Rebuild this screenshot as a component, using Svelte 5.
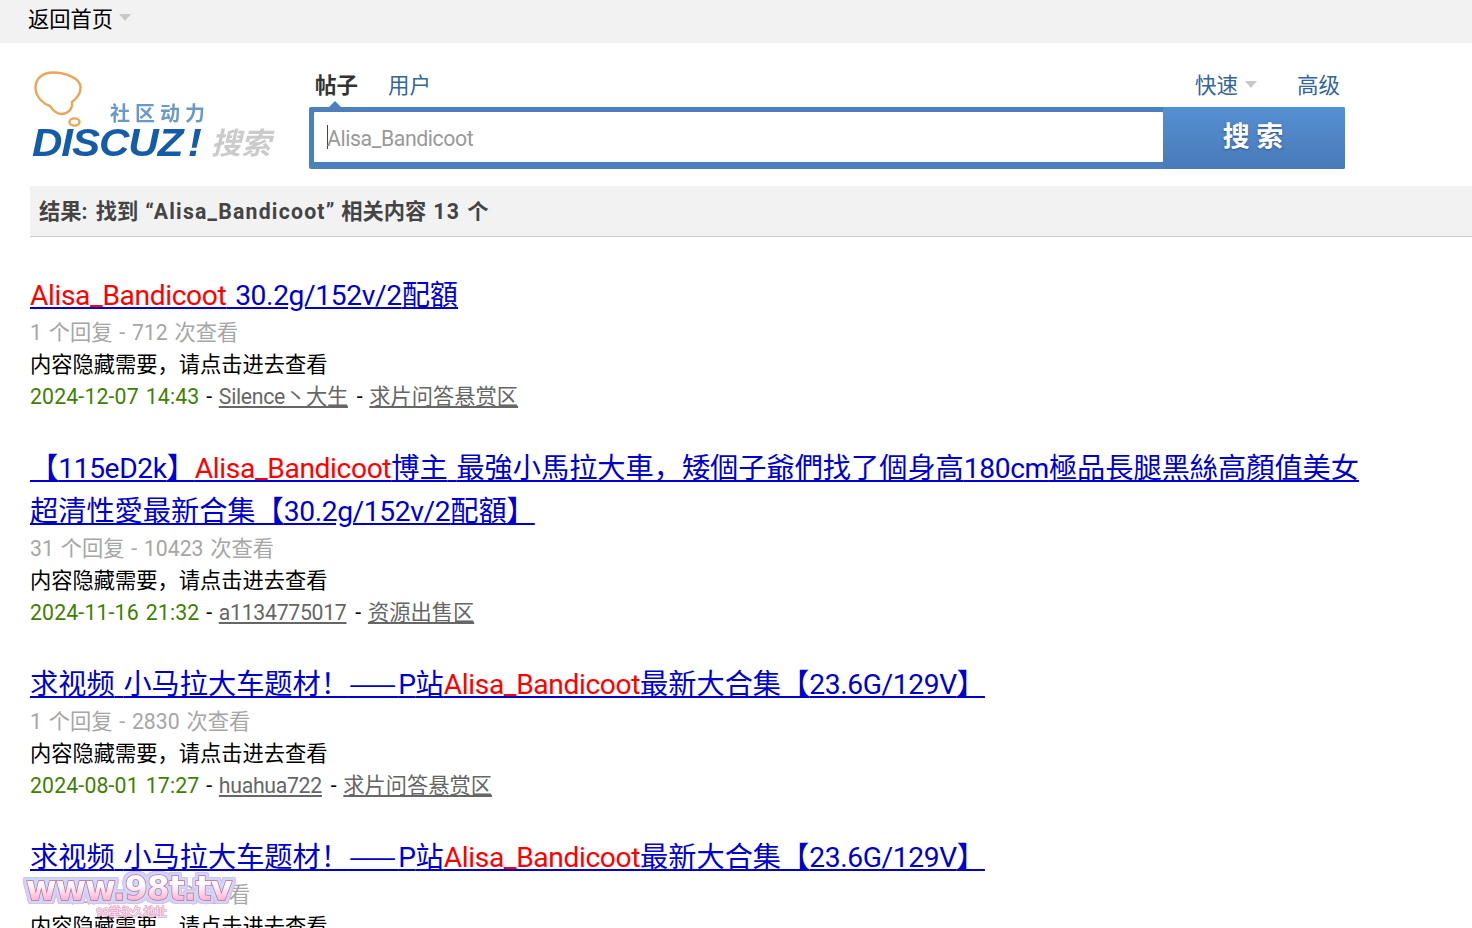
<script>
  const tag = 'Alisa_Bandicoot';

  const results = [
    {
      title: [[tag, true], [' 30.2g/152v/2配額', false]],
      meta: '1 个回复 - 712 次查看',
      date: '2024-12-07 14:43',
      user: 'Silence丶大生',
      forum: '求片问答悬赏区'
    },
    {
      title: [
        ['【115eD2k】', false],
        [tag, true],
        ['博主 最強小馬拉大車，矮個子爺們找了個身高180cm極品長腿黑絲高顏值美女超清性愛最新合集【30.2g/152v/2配額】', false]
      ],
      meta: '31 个回复 - 10423 次查看',
      date: '2024-11-16 21:32',
      user: 'a1134775017',
      forum: '资源出售区'
    },
    {
      title: [
        ['求视频 小马拉大车题材！——P站', false],
        [tag, true],
        ['最新大合集【23.6G/129V】', false]
      ],
      meta: '1 个回复 - 2830 次查看',
      date: '2024-08-01 17:27',
      user: 'huahua722',
      forum: '求片问答悬赏区'
    },
    {
      title: [
        ['求视频 小马拉大车题材！——P站', false],
        [tag, true],
        ['最新大合集【23.6G/129V】', false]
      ],
      meta: '1 个回复 - 1934 次查看',
      date: '2024-08-01 17:27',
      user: 'huahua722',
      forum: '求片问答悬赏区'
    }
  ];

  // latin runs need their own letter-spacing, the cjk ones don't
  function runs(text) {
    return text.match(/[\x20-\x7e]+|—+|[^\x20-\x7e—]+/g).map((t) => ({
      t,
      kind: t[0] === '—' ? 'dash' : t.charCodeAt(0) < 127 ? 'lat' : 'cjk'
    }));
  }
</script>

<div class="topbar">
  <a class="home" href="#top">返回首页</a>
  <span class="caret"></span>
</div>

<header class="head">
  <div class="logo">
    <svg class="bubble" width="52" height="60" viewBox="0 0 52 60">
      <path
        d="M2.5 18C2.5 8 10 2.5 20 2.5C32 2.5 47 8 47.5 17C48 24 43 29 39 32C40 37 37 43 29 44C22 44 19 39 17 36C11 34 3 28 2.5 18Z"
        fill="none"
        stroke="#eba557"
        stroke-width="2.4"
      />
      <ellipse cx="41.5" cy="52" rx="5" ry="3.6" fill="none" stroke="#eba557" stroke-width="2.4" />
    </svg>
    <span class="slogan">社区动力</span>
    <span class="brand">DISCUZ<em>!</em></span>
    <span class="sou">搜索</span>
  </div>

  <div class="search">
    <div class="tabs">
      <div class="tabs-left">
        <span class="tab on">帖子</span>
        <span class="tab">用户</span>
      </div>
      <div class="tabs-right">
        <span class="tab">快速</span>
        <span class="caret blue-caret"></span>
        <span class="tab adv">高级</span>
      </div>
    </div>
    <div class="box">
      <span class="notch"></span>
      <div class="input"><span class="cursor"></span><span class="typed">Alisa_Bandicoot</span></div>
      <div class="submit">搜 索</div>
    </div>
  </div>
</header>

<div class="summary">{#each runs('结果: 找到 “Alisa_Bandicoot” 相关内容 13 个') as run}<span class={run.kind}>{run.t}</span>{/each}</div>

<ul class="list">
  {#each results as r}
    <li>
      <h3>
        <a href="#top">{#each r.title as part}{#if part[1]}<strong class="lat">{part[0]}</strong>{:else}{#each runs(part[0]) as run}<span class={run.kind}>{run.t}</span>{/each}{/if}{/each}</a>
      </h3>
      <p class="meta">{r.meta}</p>
      <p>内容隐藏需要，请点击进去查看</p>
      <p>
        <span class="date">{r.date}</span>
        -
        <a class="sub user" href="#top">{r.user}</a>
        -
        <a class="sub" href="#top">{r.forum}</a>
      </p>
    </li>
  {/each}
</ul>

<div class="mark">
  <svg class="mark-art" width="228" height="62" viewBox="0 0 228 62">
    <defs>
      <linearGradient id="pinkfill" x1="0" y1="0" x2="0" y2="1">
        <stop offset="0.4" stop-color="#fff" />
        <stop offset="1" stop-color="#f590bb" />
      </linearGradient>
    </defs>
    <text class="url" x="8" y="34" fill="url(#pinkfill)">www.98t.tv</text>
    <text class="sub-url" x="78" y="50">98堂永久地址</text>
  </svg>
</div>

<style>
  :global(html),
  :global(body) {
    height: 100%;
    overflow: hidden;
    background: #fff;
  }

  :global(body) {
    font-family: Roboto, "Noto Sans CJK SC", sans-serif;
    font-size: 21.25px;
    color: #000;
  }

  .topbar {
    height: 43px;
    background: #f2f2f2;
    padding-left: 28px;
    display: flex;
    align-items: flex-start;
    line-height: 40px;
  }

  .home {
    color: #000;
    text-decoration: none;
  }

  .caret {
    width: 0;
    height: 0;
    margin: 14px 0 0 6px;
    border: 6.5px solid transparent;
    border-top: 7px solid #c8c8c8;
    border-bottom: 0;
  }

  .head {
    display: flex;
    height: 143px;
  }

  .logo {
    position: relative;
    width: 309px;
    flex: none;
  }

  .bubble {
    position: absolute;
    left: 33px;
    top: 27px;
    filter: blur(0.3px);
  }

  .slogan {
    position: absolute;
    left: 110px;
    top: 56px;
    font-size: 20px;
    font-weight: 700;
    letter-spacing: 5px;
    color: #6a99c9;
    line-height: 30px;
    filter: blur(0.3px);
  }

  .brand {
    position: absolute;
    left: 32px;
    top: 75px;
    font-family: "Liberation Sans", sans-serif;
    font-size: 39px;
    font-weight: 700;
    font-style: italic;
    letter-spacing: -1px;
    color: #155ca8;
    line-height: 50px;
    transform: scaleX(1.08);
    transform-origin: left;
    filter: blur(0.3px);
  }

  .brand em {
    margin-left: 5px;
  }

  .sou {
    position: absolute;
    left: 211px;
    top: 78px;
    font-size: 30px;
    font-weight: 700;
    font-style: italic;
    color: #cbcbcb;
    line-height: 46px;
    filter: blur(0.4px);
  }

  .search {
    width: 1036px;
    flex: none;
    padding-top: 26px;
  }

  .tabs {
    display: flex;
    justify-content: space-between;
    height: 38px;
    line-height: 34px;
    font-size: 21.5px;
  }

  .tabs-left {
    padding-left: 6px;
    display: flex;
    gap: 30px;
  }

  .tabs-right {
    display: flex;
    align-items: flex-start;
    padding-right: 5px;
  }

  .tab {
    color: #336699;
  }

  .tab.on {
    color: #333;
    font-weight: 700;
  }

  .blue-caret {
    margin: 12px 0 0 7px;
  }

  .adv {
    margin-left: 40px;
  }

  .box {
    position: relative;
    height: 62px;
    display: flex;
    background: #4b80bd;
    border-radius: 2px;
  }

  .notch {
    position: absolute;
    left: 20px;
    top: -6px;
    width: 0;
    height: 0;
    border: 6px solid transparent;
    border-bottom: 6px solid #4b80bd;
    border-top: 0;
  }

  .input {
    width: 849px;
    height: 50px;
    margin: 5px 0 0 5px;
    background: #fff;
    color: #999;
    display: flex;
    align-items: center;
    padding-left: 13px;
    box-sizing: border-box;
    border-radius: 1px;
  }

  .typed {
    letter-spacing: -0.4px;
    padding-top: 2px;
  }

  .cursor {
    width: 1px;
    height: 24px;
    background: #444;
    margin-right: -1px;
  }

  .submit {
    flex: 1;
    background: linear-gradient(#5590d2, #487ab8);
    color: #fff;
    font-size: 27px;
    font-weight: 700;
    text-align: center;
    line-height: 60px;
    text-shadow: 0 1px 2px #2c5488;
    padding-right: 2px;
    border-radius: 0 2px 2px 0;
  }

  .summary {
    margin-left: 30px;
    height: 51px;
    box-sizing: border-box;
    padding-left: 9px;
    background: #f2f2f2;
    border-bottom: 1px solid #cdcdcd;
    color: #444;
    font-weight: 700;
    line-height: 52px;
  }

  .summary .lat {
    letter-spacing: 1.2px;
    word-spacing: 0.5px;
  }

  .list {
    list-style: none;
    margin: 37px 0 0;
    padding: 0 100px 0 30px;
  }

  .list li {
    margin-bottom: 34px;
  }

  h3 {
    margin: 0;
    font-size: 28.2px;
    font-weight: 400;
    line-height: 43px;
  }

  h3 a {
    color: #0000cc;
  }

  h3 .lat {
    letter-spacing: -0.38px;
    word-spacing: 2.2px;
  }

  h3 .dash {
    font-family: "Noto Sans CJK SC", sans-serif;
    line-height: 0;
    letter-spacing: 2px;
  }

  strong {
    color: #f00;
    font-weight: 400;
  }

  p {
    margin: 0;
    line-height: 32px;
    word-spacing: 1.5px;
  }

  .meta {
    color: #a6a6a6;
  }

  .date {
    color: #3f8000;
    letter-spacing: 0.15px;
  }

  .sub {
    color: #666;
  }

  .user {
    letter-spacing: -0.3px;
    margin-right: 2px;
  }

  .mark {
    position: fixed;
    left: 18px;
    top: 866px;
    width: 228px;
    height: 62px;
  }

  .url {
    font-family: "DejaVu Sans", sans-serif;
    font-size: 33px;
    font-weight: 700;
    letter-spacing: -0.8px;
    stroke: #d9609f;
    stroke-width: 1.5px;
    paint-order: stroke fill;
    filter: drop-shadow(2px 0 0 #c5dcf7) drop-shadow(-2px 0 0 #c5dcf7) drop-shadow(0 2px 0 #c5dcf7)
      drop-shadow(0 -2px 0 #c5dcf7) drop-shadow(1px 0 0 #e2bce6) drop-shadow(-1px 0 0 #e2bce6)
      drop-shadow(0 1px 0 #e2bce6) drop-shadow(0 -1px 0 #e2bce6);
  }

  .sub-url {
    font-size: 11.5px;
    fill: #fbe3ee;
    stroke: #e3a9ca;
    stroke-width: 1.6px;
    paint-order: stroke fill;
  }
</style>
